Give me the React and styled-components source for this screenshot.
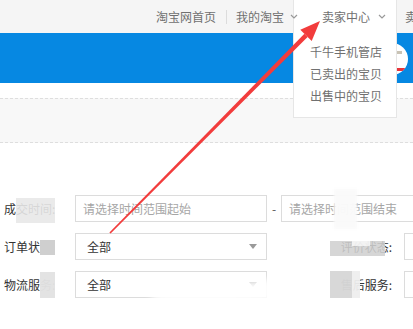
import React from 'react';
import styled, { createGlobalStyle } from 'styled-components';

const Global = createGlobalStyle`
  html, body { margin: 0; padding: 0; background: #fff; }
  body {
    font-family: "Noto Sans CJK SC", "Noto Sans", sans-serif;
    font-size: 12px;
    color: #333;
  }
  #root { width: 413px; height: 329px; overflow: hidden; }
`;

const Page = styled.div`
  position: relative;
  width: 413px;
  height: 329px;
  overflow: hidden;
  background: #fff;
`;

const TopBar = styled.div`
  height: 33px;
  background: #f5f5f5;
  display: flex;
  align-items: stretch;
  padding-left: 156px;
  color: #707070;
  font-size: 12px;
  line-height: 33px;
  white-space: nowrap;
  position: relative;
  z-index: 5;
`;

const TopLink = styled.span`
  display: flex;
  align-items: center;
  flex: none;
  gap: ${p => p.$gap || 0}px;
  position: relative;
  z-index: 2;
  margin-left: ${p => p.$ml || 0}px;
`;

const Sep = styled.span`
  align-self: center;
  flex: none;
  width: 1px;
  height: 14px;
  background: #dcdcdc;
  margin: 0 9px 0 10px;
`;

const Chevron = styled.svg`
  width: 8px;
  height: 5px;
  flex: none;
`;

const DropWrap = styled.div`
  position: relative;
  flex: none;
  width: 104px;
  box-sizing: border-box;
  margin-left: -5px;
  background: #fff;
  border-left: 1px solid #e6e6e6;
  border-right: 1px solid #e6e6e6;
  display: flex;
  align-items: center;
  padding-left: 28px;
  gap: 8px;
`;

const Menu = styled.div`
  position: absolute;
  top: 33px;
  left: -1px;
  width: 104px;
  height: 85px;
  box-sizing: border-box;
  background: #fff;
  border: 1px solid #e6e6e6;
  border-top: none;
  padding: 8px 0 0 16px;
  display: flex;
  flex-direction: column;
`;

const MenuItem = styled.span`
  line-height: 22px;
  height: 22px;
  color: #707070;
  font-size: 12px;
`;

const Banner = styled.div`
  height: 50px;
  background: #0688e2;
  display: flex;
  justify-content: flex-end;
  align-items: center;
`;

const Badge = styled.div`
  flex: none;
  width: 32px;
  height: 32px;
  border-radius: 50%;
  background: #fff;
  margin-right: 5px;
  margin-top: 2px;
  overflow: hidden;
  display: flex;
  flex-direction: column;
  justify-content: space-between;
  align-items: flex-end;
  padding: 8px 0 4px;
  box-sizing: border-box;
`;

const BadgeMark = styled.div`
  width: 6px;
  height: 3px;
  margin-right: 6px;
  background: #c9c3b5;
`;

const BadgeRed = styled.div`
  width: 10px;
  height: 3px;
  margin-right: 3px;
  background: #e8343a;
`;

const Gap = styled.div`
  height: ${p => p.$h}px;
`;

const GraySection = styled.div`
  height: 43px;
  background: #f8f8f8;
  border-top: 1px dashed #dedede;
  border-bottom: 1px dashed #dedede;
`;

const Form = styled.div`
  margin-top: 52px;
  display: flex;
  flex-direction: column;
  gap: 11px;
`;

const Row = styled.div`
  position: relative;
  display: flex;
  align-items: center;
  height: 27px;
`;

const Label = styled.span`
  flex: none;
  width: 75px;
  box-sizing: border-box;
  padding-left: 4px;
  color: #333;
  font-size: 12px;
  white-space: nowrap;
  overflow: hidden;
`;

const Field = styled.div`
  flex: none;
  width: ${p => p.$w}px;
  height: 27px;
  box-sizing: border-box;
  border: 1px solid #dcdcdc;
  background: #fff;
  display: flex;
  align-items: center;
  justify-content: space-between;
  padding: 0 8px 0 ${p => p.$pl || 7}px;
  font-size: 12px;
  color: ${p => (p.$ph ? '#a6a6a6' : '#333')};
  white-space: nowrap;
  overflow: hidden;
`;

const Dash = styled.span`
  flex: none;
  width: 14px;
  text-align: center;
  color: #555;
`;

const Caret = styled.svg`
  flex: none;
  width: 8px;
  height: 5px;
  margin-right: 1px;
`;

const RightLabel = styled.span`
  flex: none;
  width: 137px;
  text-align: right;
  padding-right: 12px;
  box-sizing: border-box;
  color: #333;
  font-size: 12px;
  white-space: nowrap;
`;

const Mosaic = styled.div`
  position: absolute;
  left: ${p => p.$x}px;
  top: ${p => p.$y}px;
  width: ${p => p.$w}px;
  height: ${p => p.$h}px;
  background: ${p => p.$bg};
  filter: blur(${p => p.$blur || 0.6}px);
`;

const Smear = styled.div`
  position: absolute;
  left: 150px;
  top: 283px;
  width: 135px;
  height: 22px;
  background: rgba(255, 255, 255, 0.92);
  border-radius: 40% 10% 10% 60%;
  filter: blur(3px);
  transform: rotate(-4deg);
  z-index: 3;
`;

const ArrowSvg = styled.svg`
  position: absolute;
  left: 0;
  top: 0;
  width: 413px;
  height: 329px;
  pointer-events: none;
  z-index: 10;
`;

const ChevronIcon = () => (
  <Chevron viewBox="0 0 8 5">
    <path d="M1 1 L4 4 L7 1" fill="none" stroke="#999" strokeWidth="1.2" />
  </Chevron>
);

const CaretIcon = ({ color = '#9a9a9a' }) => (
  <Caret viewBox="0 0 8 5">
    <path d="M0 0 L8 0 L4 5 Z" fill={color} />
  </Caret>
);

export default function App() {
  return (
    <Page>
      <Global />
      <TopBar>
        <TopLink>淘宝网首页</TopLink>
        <Sep />
        <TopLink $gap={6}>
          我的淘宝
          <ChevronIcon />
        </TopLink>
        <DropWrap>
          <span>卖家中心</span>
          <ChevronIcon />
          <Menu>
            <MenuItem>千牛手机管店</MenuItem>
            <MenuItem>已卖出的宝贝</MenuItem>
            <MenuItem>出售中的宝贝</MenuItem>
          </Menu>
        </DropWrap>
        <TopLink $ml={8}>卖</TopLink>
      </TopBar>
      <Banner>
        <Badge>
          <BadgeMark />
          <BadgeRed />
        </Badge>
      </Banner>
      <Gap $h={15} />
      <GraySection />
      <Form>
        <Row>
          <Label>成交时间:</Label>
          <Field $w={192} $ph>请选择时间范围起始</Field>
          <Dash>-</Dash>
          <Field $w={150} $ph>请选择时间范围结束</Field>
          <Mosaic $x={16} $y={3} $w={39} $h={25} $bg="rgba(232,232,232,0.9)" />
          <Mosaic $x={334} $y={-6} $w={23} $h={40} $bg="rgba(250,250,250,0.97)" $blur={1} />
        </Row>
        <Row>
          <Label>订单状态:</Label>
          <Field $w={192} $pl={11}>
            全部
            <CaretIcon />
          </Field>
          <RightLabel>评价状态:</RightLabel>
          <Field $w={40} />
          <Mosaic $x={40} $y={7} $w={15} $h={15} $bg="#cfcfcf" />
          <Mosaic $x={330} $y={8} $w={55} $h={15} $bg="rgba(208,208,208,0.88)" />
          <Mosaic $x={352} $y={7} $w={18} $h={6} $bg="rgba(255,255,255,0.7)" />
        </Row>
        <Row>
          <Label>物流服务:</Label>
          <Field $w={192} $pl={11}>
            全部
            <CaretIcon color="#aaa" />
          </Field>
          <RightLabel>售后服务:</RightLabel>
          <Field $w={40} />
          <Mosaic $x={40} $y={1} $w={15} $h={26} $bg="rgba(226,226,226,0.97)" />
          <Mosaic $x={330} $y={0} $w={22} $h={27} $bg="rgba(215,215,215,0.97)" />
          <Mosaic $x={352} $y={0} $w={8} $h={27} $bg="rgba(238,238,238,0.95)" />
        </Row>
      </Form>
      <Smear />
      <ArrowSvg viewBox="0 0 413 329">
        <polygon
          points="110.6,233.6 109.4,232.4 304.4,33.7 307.6,36.9"
          fill="#f23c3c"
        />
        <polygon points="320,21 311.7,40.9 300.3,29.7" fill="#f23c3c" />
      </ArrowSvg>
    </Page>
  );
}
